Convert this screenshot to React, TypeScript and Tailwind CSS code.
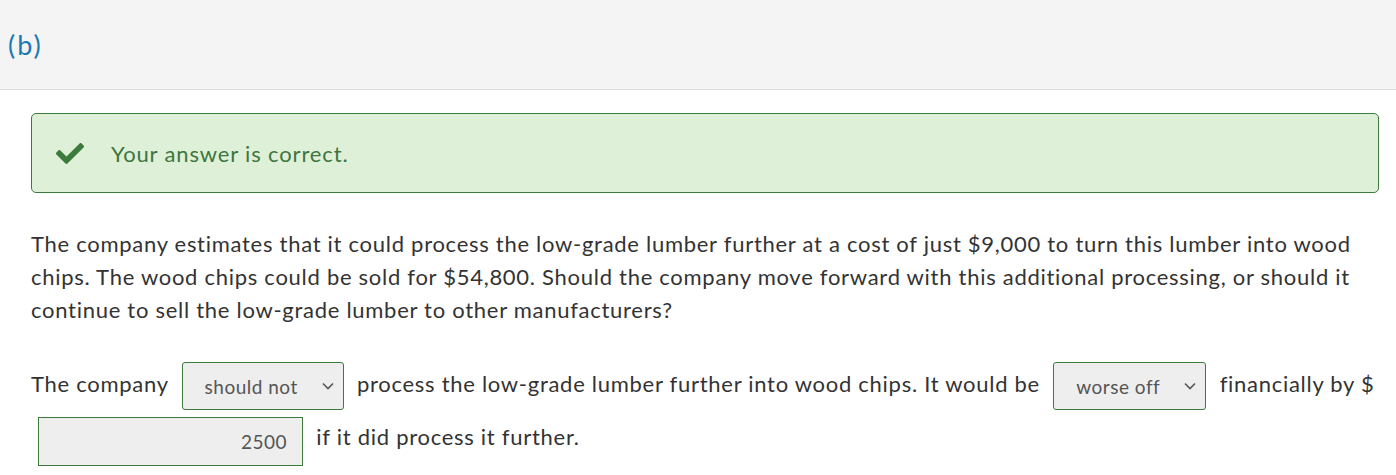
import React from "react";

const Chevron = () => (
  <svg width="12" height="8" viewBox="0 0 12 8" className="shrink-0">
    <path d="M1 1.5 L6 6.5 L11 1.5" fill="none" stroke="#555" strokeWidth="1.6" />
  </svg>
);

const Select = ({ value, width }: { value: string; width: string }) => (
  <span
    className={`inline-flex items-center justify-between align-middle h-[48px] my-[3px] mx-[7px] rounded-[3px] border border-[#3d7b3d] bg-[#eeeeee] pl-[22px] pr-[9px] text-[19px] tracking-[0.5px] text-[#555] ${width}`}
  >
    <span>{value}</span>
    <Chevron />
  </span>
);

export default function App() {
  return (
    <div className="w-[1396px] min-h-[475px] bg-white text-[#333]" style={{ fontFamily: "Lato, 'Noto Sans', sans-serif" }}>
      <div className="h-[90px] bg-[#f4f4f4] border-b border-[#dddddd] flex items-center pl-[8px]">
        <span className="text-[27px] tracking-[2px] text-[#1a7ab3] leading-none">(b)</span>
      </div>
      <div className="pl-[31px] pr-[17px]">
        <div className="mt-[23px] h-[80px] rounded-[5px] border border-[#3d7b3d] bg-[#dff0d8] flex items-center">
          <svg width="28" height="21" viewBox="0 72 512 370" className="ml-[24px]">
            <path
              fill="#3d7b3d"
              d="M173.898 439.404l-166.4-166.4c-9.997-9.997-9.997-26.206 0-36.204l36.203-36.204c9.997-9.998 26.207-9.998 36.204 0L192 312.69 432.095 72.596c9.997-9.997 26.207-9.997 36.204 0l36.203 36.204c9.997 9.997 9.997 26.206 0 36.204l-294.4 294.401c-9.998 9.997-26.207 9.997-36.204-.001z"
            />
          </svg>
          <span className="ml-[27px] text-[22px] tracking-[0.85px] text-[#3c763d]">Your answer is correct.</span>
        </div>
        <p className="mt-[34px] text-[22px] tracking-[0.72px] leading-[33px]">
          The company estimates that it could process the low-grade lumber further at a cost of just $9,000 to turn this lumber into wood chips. The wood chips could be sold for $54,800. Should the company move forward with this additional processing, or should it continue to sell the low-grade lumber to other manufacturers?
        </p>
        <p className="mt-[33px] text-[22px] tracking-[0.72px] leading-[33px]">
          The company <Select value="should not" width="w-[162px]" /> process the low-grade lumber further into wood chips. It would be{" "}
          <Select value="worse off" width="w-[153px]" /> financially by ${" "}
          <span className="inline-flex items-center justify-end align-middle h-[49px] w-[265px] mt-[4px] mx-[7px] border border-[#3d7b3d] bg-[#eeeeee] pr-[15px] text-[19px] tracking-[0.5px] text-[#555]">
            2500
          </span>{" "}
          if it did process it further.
        </p>
      </div>
    </div>
  );
}
